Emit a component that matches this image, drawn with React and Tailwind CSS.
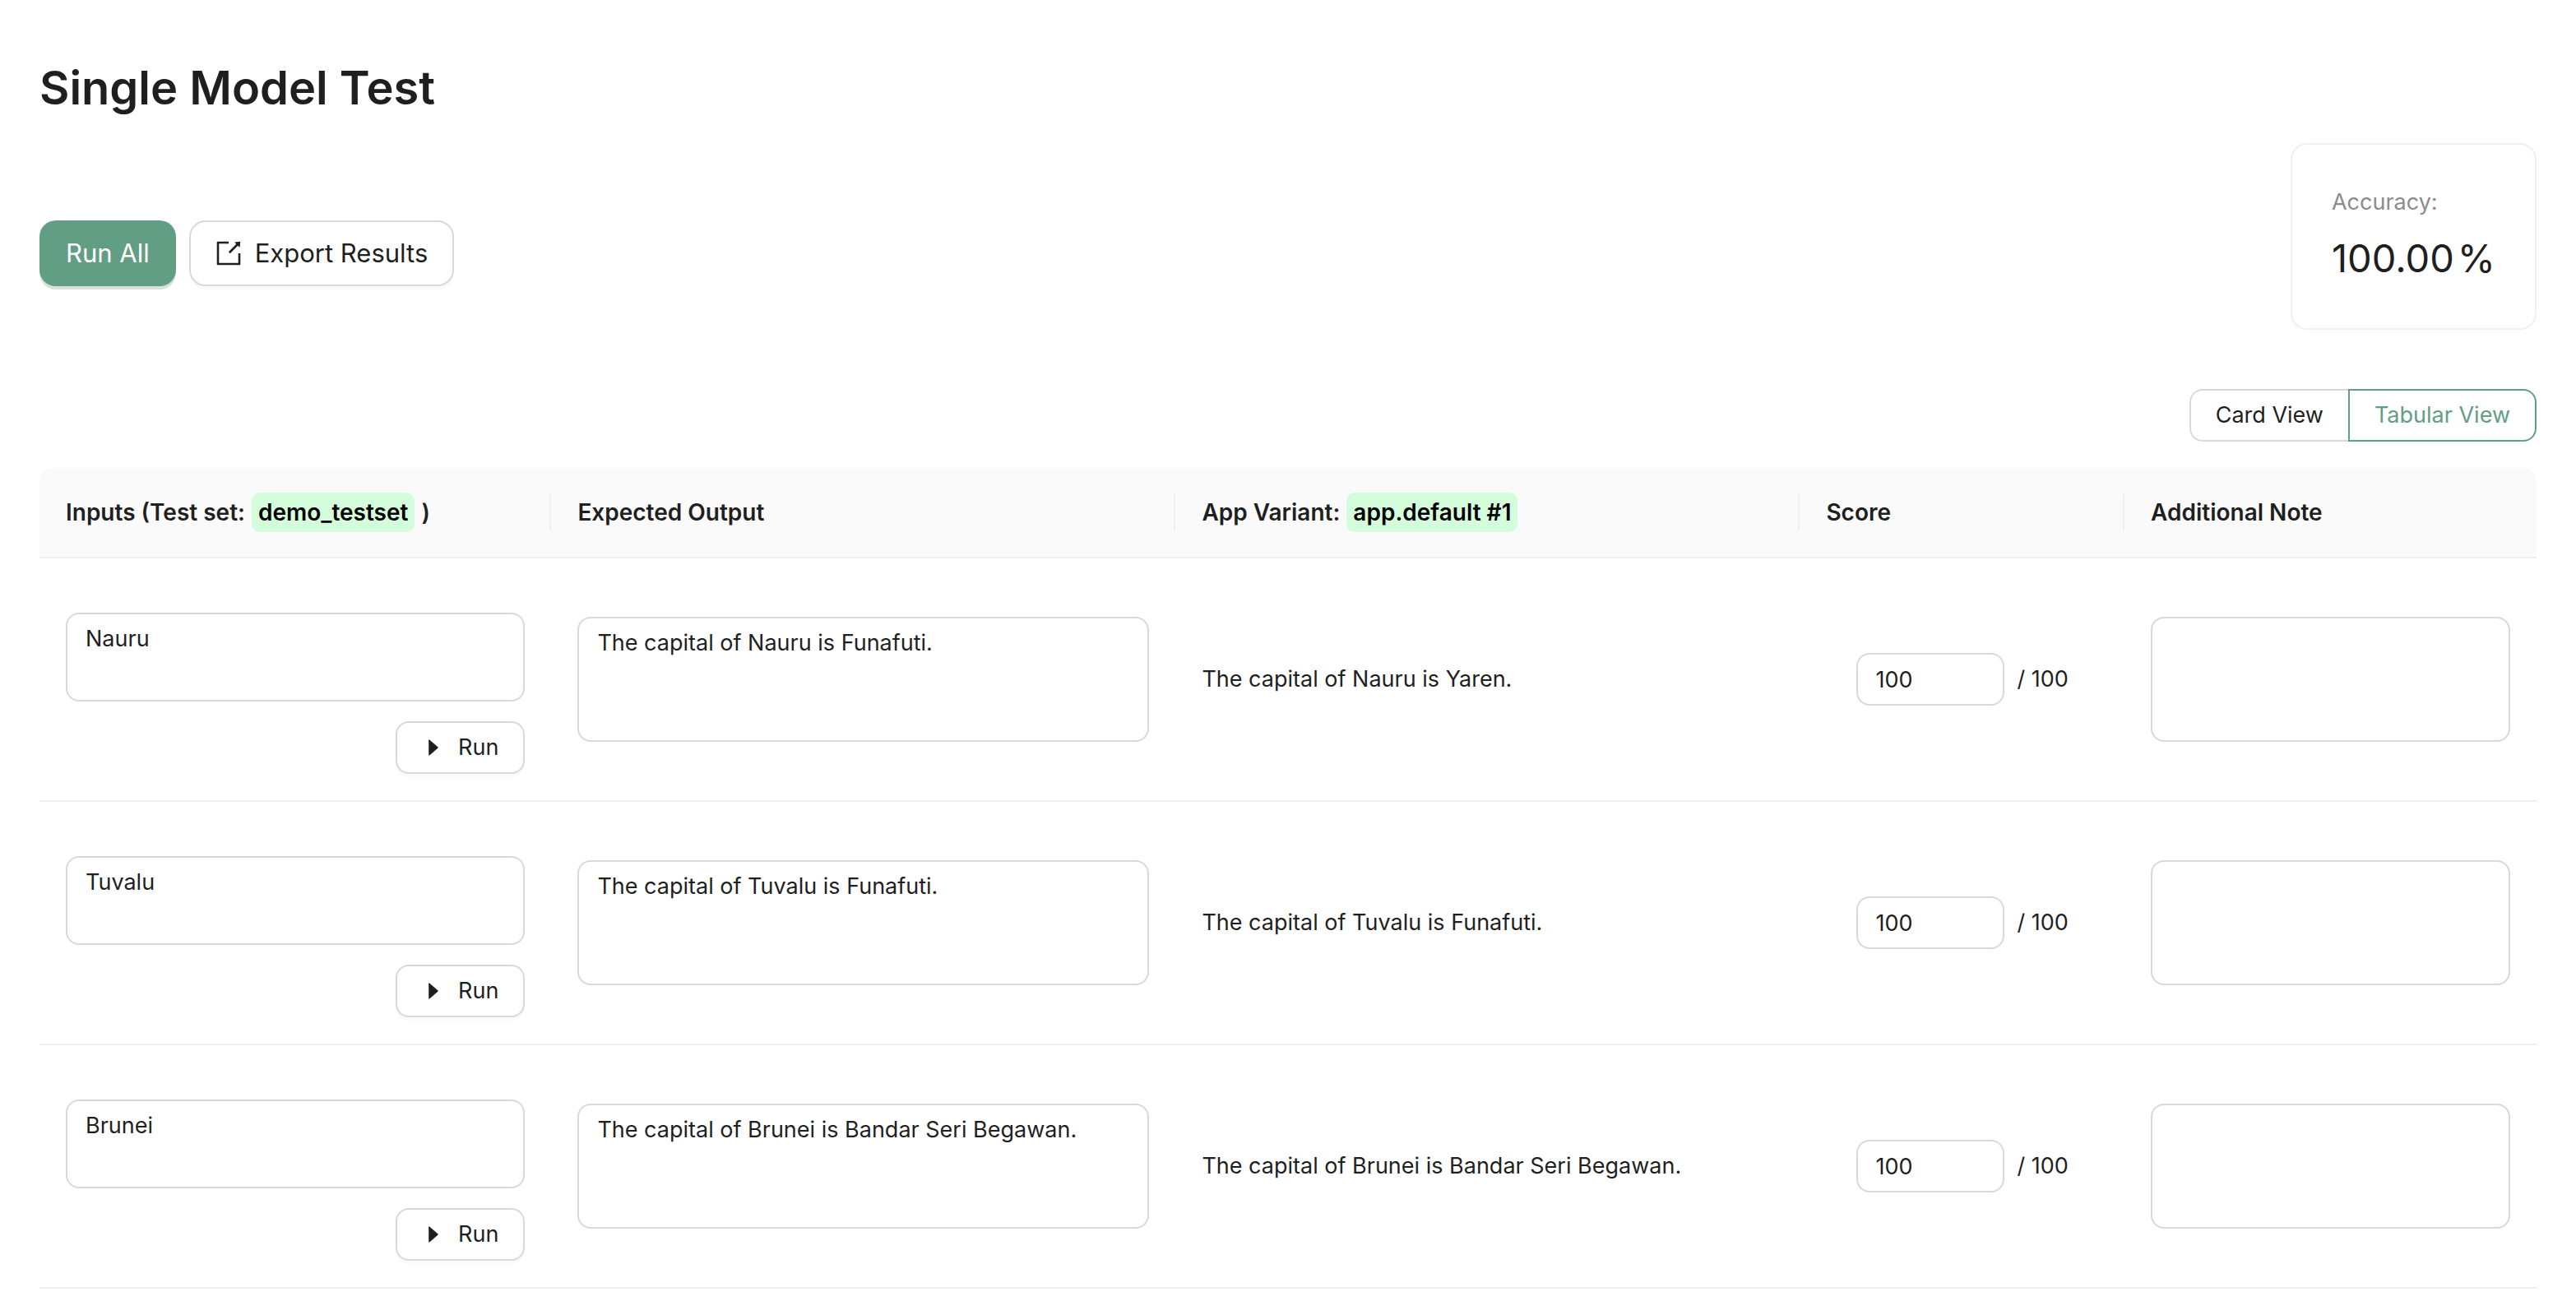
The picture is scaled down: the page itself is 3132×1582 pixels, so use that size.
const rows = [
  { input: "Nauru", expected: "The capital of Nauru is Funafuti.", output: "The capital of Nauru is Yaren." },
  { input: "Tuvalu", expected: "The capital of Tuvalu is Funafuti.", output: "The capital of Tuvalu is Funafuti." },
  {
    input: "Brunei",
    expected: "The capital of Brunei is Bandar Seri Begawan.",
    output: "The capital of Brunei is Bandar Seri Begawan.",
  },
];

function ExportIcon() {
  return (
    <svg viewBox="64 64 896 896" className="size-8" fill="currentColor" aria-hidden="true">
      <path d="M880 912H144c-17.700 0-32-14.300-32-32V144c0-17.700 14.300-32 32-32h360c4.400 0 8 3.600 8 8v56c0 4.400-3.600 8-8 8H184v656h656V520c0-4.400 3.600-8 8-8h56c4.400 0 8 3.600 8 8v360c0 17.700-14.300 32-32 32zM770.870 199.130l-52.200-52.200a8.010 8.010 0 014.700-13.600l179.400-21c5.100-.6 9.500 3.700 8.900 8.900l-21 179.400c-.8 6.600-8.900 9.400-13.600 4.700l-52.400-52.400-256.200 256.200a8.030 8.030 0 01-11.300 0l-42.400-42.400a8.030 8.030 0 010-11.300l256.100-256.300z" />
    </svg>
  );
}

function CaretRightIcon() {
  return (
    <svg viewBox="0 0 1024 1024" className="size-7" fill="currentColor" aria-hidden="true">
      <path d="M715.800 493.500L335 165.100c-14.200-12.200-35-1.200-35 18.500v656.800c0 19.700 20.800 30.700 35 18.500l380.800-328.400c10.900-9.400 10.900-27.600 0-37z" />
    </svg>
  );
}

function Tag({ children }) {
  return <span className="rounded-[10px] bg-[#d4fddb] p-2 leading-8 text-black">{children}</span>;
}

function HeaderCell({ width, last, children }) {
  return (
    <th scope="col" className={`${width} p-0 text-left text-[28px] font-semibold`}>
      <div className={`my-8 flex h-11 items-center gap-2 pl-8 ${last ? "" : "border-r-2 border-[#f0f0f0]"}`}>
        {children}
      </div>
    </th>
  );
}

const field =
  "block w-full resize-none rounded-2xl border-2 border-[#d9d9d9] bg-white px-[22px] py-2 leading-11 outline-none";

export default function App() {
  return (
    <main className="bg-white px-12 pt-[60px] pb-4 font-['Inter',sans-serif] text-[27px] leading-11 text-[#1f1f1f]">
      <h1 className="text-[56px] leading-[94px] font-semibold">Single Model Test</h1>

      <div className="mt-5 flex items-center justify-between">
        <div className="mt-10 flex gap-4">
          <button
            type="button"
            className="h-20 rounded-[20px] bg-[#629e84] px-8 text-[31px] text-white shadow-[0_4px_0_#d7e1da]"
          >
            Run All
          </button>
          <button
            type="button"
            className="flex h-20 items-center gap-4 rounded-[20px] border-2 border-[#d9d9d9] bg-white px-[30px] text-[31px] shadow-[0_4px_0_#fafafa]"
          >
            <ExportIcon />
            Export Results
          </button>
        </div>
        <section className="rounded-[20px] border-2 border-[#f0f0f0] p-12">
          <h2 className="text-[#8c8c8c]">Accuracy:</h2>
          <p className="mt-2 flex gap-1 text-[47px] leading-[75px]">
            <span>100.00</span>
            <span>%</span>
          </p>
        </section>
      </div>

      <div className="mt-[72px] flex justify-end">
        <button type="button" className="h-16 rounded-l-2xl border-2 border-r-0 border-[#d9d9d9] px-[30px]">
          Card View
        </button>
        <button
          type="button"
          aria-pressed="true"
          className="h-16 rounded-r-2xl border-2 border-[#629e84] px-[30px] text-[#629e84]"
        >
          Tabular View
        </button>
      </div>

      <table className="mt-8 w-full table-fixed border-separate border-spacing-0 [&_td]:border-b-2 [&_td]:border-[#f0f0f0] [&_th]:border-b-2 [&_th]:border-[#f0f0f0]">
        <thead>
          <tr className="[&>th]:bg-[#fafafa] [&>th:first-child]:rounded-tl-2xl [&>th:last-child]:rounded-tr-2xl">
            <HeaderCell width="w-[20.5%]">
              Inputs (Test set: <Tag>demo_testset</Tag> )
            </HeaderCell>
            <HeaderCell width="w-[25%]">Expected Output</HeaderCell>
            <HeaderCell width="w-[25%]">
              App Variant: <Tag>app.default #1</Tag>
            </HeaderCell>
            <HeaderCell width="w-[13%]">Score</HeaderCell>
            <HeaderCell width="w-[16.5%]" last>
              Additional Note
            </HeaderCell>
          </tr>
        </thead>
        <tbody>
          {rows.map((row) => (
            <tr key={row.input}>
              <td className="px-8 pt-[66px] pb-8">
                <textarea aria-label="Input" defaultValue={row.input} className={`${field} h-[108px]`} />
                <div className="mt-6 flex justify-end">
                  <button
                    type="button"
                    className="flex h-16 items-center gap-4 rounded-2xl border-2 border-[#d9d9d9] bg-white px-[30px] shadow-[0_4px_0_#fafafa]"
                  >
                    <CaretRightIcon />
                    Run
                  </button>
                </div>
              </td>
              <td className="px-8">
                <textarea
                  aria-label={`Expected output for ${row.input}`}
                  defaultValue={row.expected}
                  className={`${field} h-[152px]`}
                />
              </td>
              <td className="px-8">{row.output}</td>
              <td className="px-8">
                <label className="flex items-center justify-center gap-4">
                  <input
                    type="text"
                    inputMode="numeric"
                    aria-label={`Score for ${row.input}`}
                    defaultValue="100"
                    className="h-16 w-[180px] rounded-2xl border-2 border-[#d9d9d9] px-[22px] outline-none"
                  />
                  <span>/ 100</span>
                </label>
              </td>
              <td className="px-8">
                <textarea aria-label={`Additional note for ${row.input}`} className={`${field} h-[152px]`} />
              </td>
            </tr>
          ))}
        </tbody>
      </table>
    </main>
  );
}
